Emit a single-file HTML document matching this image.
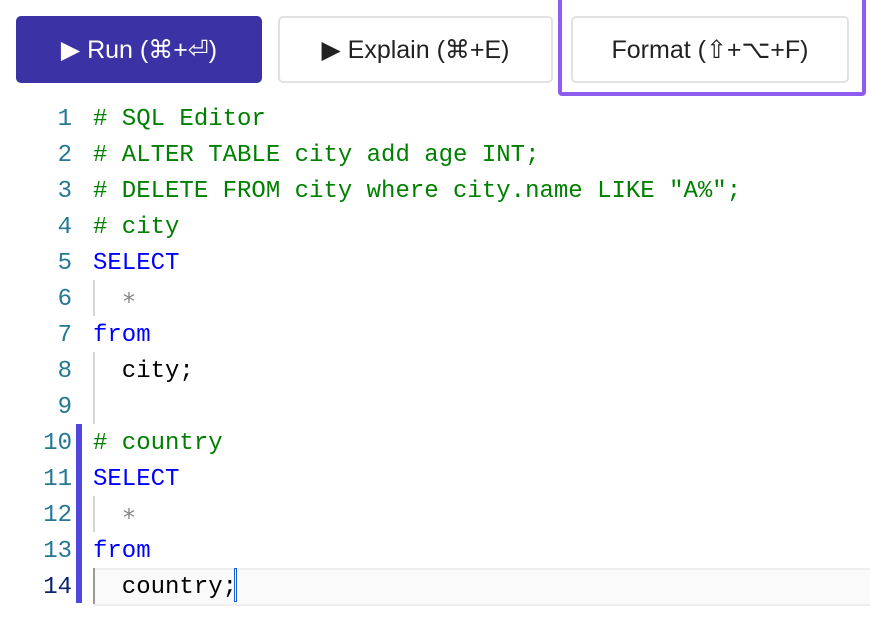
<!DOCTYPE html>
<html><head><style>
body{margin:0;width:870px;height:618px;background:#fff;overflow:hidden;position:relative;font-family:"Liberation Sans",sans-serif}
.btn{position:absolute;top:16px;height:67px;box-sizing:border-box;border-radius:5px;font-size:25px;display:flex;align-items:center;justify-content:center}
.run{left:16px;width:246px;background:#3b32a6;color:#fff}
.exp{left:278px;width:275px;border:2px solid #e2e2e2;color:#222}
.fmt{left:571px;width:278px;border:2px solid #e2e2e2;color:#222}
.ring{position:absolute;left:558px;top:-4px;width:300px;height:92px;border:4px solid #8f5cf0;border-radius:4px}
.code{position:absolute;top:102px;left:0;font-family:"Liberation Mono",monospace;font-size:24px}
.ln{position:absolute;left:0;width:72px;text-align:right;color:#237893;height:36px;line-height:36px}
.tx{position:absolute;left:93px;height:36px;line-height:36px;white-space:pre}
.c{color:#008000}.k{color:#0000ff}.g{color:#888}
.guide{position:absolute;left:93px;width:2px;height:36px;background:#d6d6d6}
</style></head><body>
<div class="ring"></div>
<div class="btn run">▶ Run (⌘+⏎)</div>
<div class="btn exp">▶ Explain (⌘+E)</div>
<div class="btn fmt">Format (⇧+⌥+F)</div>
<div style="position:absolute;left:76px;top:424px;width:6px;height:179px;background:#5046e0"></div>
<div style="position:absolute;left:93px;top:568px;width:777px;height:34px;border-top:2px solid #eee;border-bottom:2px solid #eee;background:#fafafa"></div>
<div class="code">
<div class="ln" style="top:0">1</div><div class="tx c" style="top:0"># SQL Editor</div>
<div class="ln" style="top:36px">2</div><div class="tx c" style="top:36px"># ALTER TABLE city add age INT;</div>
<div class="ln" style="top:72px">3</div><div class="tx c" style="top:72px"># DELETE FROM city where city.name LIKE "A%";</div>
<div class="ln" style="top:108px">4</div><div class="tx c" style="top:108px"># city</div>
<div class="ln" style="top:144px">5</div><div class="tx k" style="top:144px">SELECT</div>
<div class="ln" style="top:180px">6</div><div class="guide" style="top:178px"></div><div class="tx g" style="top:180px">  ∗</div>
<div class="ln" style="top:216px">7</div><div class="tx k" style="top:216px">from</div>
<div class="ln" style="top:252px">8</div><div class="guide" style="top:250px"></div><div class="tx" style="top:252px">  city;</div>
<div class="ln" style="top:288px">9</div><div class="guide" style="top:286px"></div>
<div class="ln" style="top:324px">10</div><div class="tx c" style="top:324px"># country</div>
<div class="ln" style="top:360px">11</div><div class="tx k" style="top:360px">SELECT</div>
<div class="ln" style="top:396px">12</div><div class="guide" style="top:394px"></div><div class="tx g" style="top:396px">  ∗</div>
<div class="ln" style="top:432px">13</div><div class="tx k" style="top:432px">from</div>
<div class="ln" style="top:468px;color:#0b216f">14</div><div class="guide" style="top:466px;background:#999"></div><div class="tx" style="top:468px">  country;</div>
<div style="position:absolute;left:234px;top:466px;width:3px;height:34px;border:1px solid #1a5fd6;box-sizing:border-box"></div>
</div>
</body></html>
